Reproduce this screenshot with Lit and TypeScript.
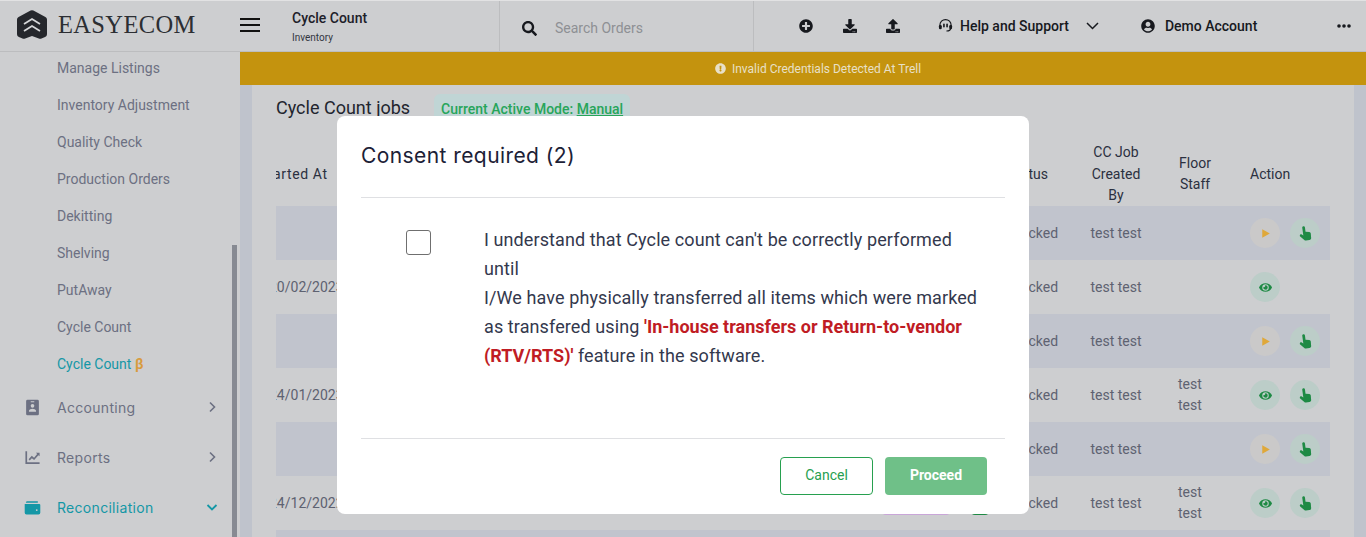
import { LitElement, html, css, svg } from "lit";
import { customElement } from "lit/decorators.js";

const ic = (vb: string, d: string, cls = "") =>
  html`<svg class=${cls} viewBox=${vb} fill="currentColor" aria-hidden="true">${svg`<path d=${d}></path>`}</svg>`;

const P = {
  search: "M505 442.7L405.3 343c-4.5-4.5-10.6-7-17-7H372c27.6-35.3 44-79.7 44-128C416 93.1 322.9 0 208 0S0 93.1 0 208s93.1 208 208 208c48.3 0 92.7-16.4 128-44v16.3c0 6.4 2.5 12.5 7 17l99.7 99.7c9.4 9.4 24.6 9.4 33.9 0l28.3-28.3c9.4-9.4 9.4-24.6.1-34zM208 336c-70.7 0-128-57.2-128-128 0-70.7 57.2-128 128-128 70.7 0 128 57.2 128 128 0 70.7-57.2 128-128 128z",
  plus: "M256 8C119 8 8 119 8 256s111 248 248 248 248-111 248-248S393 8 256 8zm144 276c0 6.6-5.4 12-12 12h-92v92c0 6.6-5.4 12-12 12h-56c-6.6 0-12-5.4-12-12v-92h-92c-6.6 0-12-5.4-12-12v-56c0-6.6 5.4-12 12-12h92v-92c0-6.6 5.4-12 12-12h56c6.6 0 12 5.4 12 12v92h92c6.6 0 12 5.4 12 12v56z",
  download: "M216 0h80c13.3 0 24 10.7 24 24v168h87.7c17.8 0 26.7 21.5 14.1 34.1L269.7 378.3c-7.5 7.5-19.8 7.5-27.3 0L90.1 226.1c-12.6-12.6-3.7-34.1 14.1-34.1H192V24c0-13.3 10.7-24 24-24zm296 376v112c0 13.3-10.7 24-24 24H24c-13.3 0-24-10.7-24-24V376c0-13.3 10.7-24 24-24h146.7l49 49c20.1 20.1 52.5 20.1 72.6 0l49-49H488c13.3 0 24 10.7 24 24zm-124 88c0-11-9-20-20-20s-20 9-20 20 9 20 20 20 20-9 20-20zm64 0c0-11-9-20-20-20s-20 9-20 20 9 20 20 20 20-9 20-20z",
  upload: "M296 384h-80c-13.3 0-24-10.7-24-24V192h-87.7c-17.8 0-26.7-21.5-14.1-34.1L242.3 5.7c7.5-7.5 19.8-7.5 27.3 0l152.2 152.2c12.6 12.6 3.7 34.1-14.1 34.1H320v168c0 13.3-10.7 24-24 24zm216-8v112c0 13.3-10.7 24-24 24H24c-13.3 0-24-10.7-24-24V376c0-13.3 10.7-24 24-24h136v8c0 30.9 25.1 56 56 56h80c30.9 0 56-25.1 56-56v-8h136c13.3 0 24 10.7 24 24zm-124 88c0-11-9-20-20-20s-20 9-20 20 9 20 20 20 20-9 20-20zm64 0c0-11-9-20-20-20s-20 9-20 20 9 20 20 20 20-9 20-20z",
  user: "M248 8C111 8 0 119 0 256s111 248 248 248 248-111 248-248S385 8 248 8zm0 96c48.6 0 88 39.4 88 88s-39.4 88-88 88-88-39.4-88-88 39.4-88 88-88zm0 344c-58.7 0-111.3-26.6-146.5-68.2 18.8-35.4 55.6-59.8 98.5-59.8 2.4 0 4.8.4 7.1 1.1 13 4.2 26.6 6.9 40.9 6.9 14.3 0 28-2.7 40.9-6.9 2.3-.7 4.7-1.1 7.1-1.1 42.9 0 79.7 24.4 98.5 59.8C359.3 421.4 306.7 448 248 448z",
  eye: "M572.52 241.4C518.29 135.59 410.93 64 288 64S57.68 135.64 3.48 241.41a32.35 32.35 0 0 0 0 29.19C57.71 376.41 165.07 448 288 448s230.32-71.64 284.52-177.41a32.35 32.35 0 0 0 0-29.19zM288 400a144 144 0 1 1 144-144 143.93 143.93 0 0 1-144 144zm0-240a95.31 95.31 0 0 0-25.31 3.79 47.85 47.85 0 0 1-66.9 66.9A95.78 95.78 0 1 0 288 160z",
  info: "M504 256c0 136.997-111.043 248-248 248S8 392.997 8 256C8 119.083 119.043 8 256 8s248 111.083 248 248zm-248 50c-25.405 0-46 20.595-46 46s20.595 46 46 46 46-20.595 46-46-20.595-46-46-46zm-43.673-165.346l7.418 136c.347 6.364 5.609 11.346 11.982 11.346h48.546c6.373 0 11.635-4.982 11.982-11.346l7.418-136c.375-6.874-5.098-12.654-11.982-12.654h-63.383c-6.884 0-12.356 5.78-11.981 12.654z",
  hand: "M8.6 3.3c0-1.1.8-2 1.9-2s1.9.9 1.9 2v6.1l5.2 1.3c1.1.3 1.8 1.2 1.8 2.3l-.4 6.5c-.1 1.4-1.3 2.5-2.7 2.5h-5c-.9 0-1.7-.4-2.2-1.1L4 15.2c-.6-.8-.5-1.9.2-2.6.7-.6 1.7-.6 2.4 0l2 1.6V3.3z",
  play: "M6 4l14 8-14 8z",
  badge: "M5 1h14a2 2 0 0 1 2 2v18a2 2 0 0 1-2 2H5a2 2 0 0 1-2-2V3a2 2 0 0 1 2-2zm7 6a2.6 2.6 0 1 0 0 5.2A2.6 2.6 0 0 0 12 7zm-5 11h10v-1.4c0-2-3.3-3-5-3s-5 1-5 3V18zM9.5 3v1.6h5V3h-5z",
  chart: "M2 3h2.4v15.6H22V21H2V3zm4.5 11.5l4.5-5 3.2 2.8L18.6 7l-1.7-1.6H22v5l-1.7-1.7-6 7-3.2-2.8-3 3.3-1.6-1.7z",
  wallet: "M4 3h15.5v2.4H2.6C2.9 4 3.3 3 4 3zM1 7h20.5A1.5 1.5 0 0 1 23 8.5v11a2.5 2.5 0 0 1-2.5 2.5h-17A2.5 2.5 0 0 1 1 19.5V7zm17 7.3a1.3 1.3 0 1 0 0 2.6 1.3 1.3 0 0 0 0-2.6z",
};

type Row = { date?: string; staff?: boolean; first: "play" | "eye"; hand: boolean; tags?: boolean };
const rows: Row[] = [
  { first: "play", hand: true },
  { date: "20/02/2023", first: "eye", hand: false },
  { first: "play", hand: true },
  { date: "24/01/2023", staff: true, first: "eye", hand: true },
  { first: "play", hand: true },
  { date: "24/12/2022", staff: true, first: "eye", hand: true, tags: true },
  { first: "play", hand: true },
];

@customElement("app-root")
export class AppRoot extends LitElement {
  static styles = css`
    :host { display: block; height: 537px; overflow: hidden; position: relative; background: #cdced0;
      font-family: Roboto, "Liberation Sans", sans-serif; color: #2b3040; }
    svg { display: block; }
    .header { height: 52px; box-sizing: border-box; display: flex; align-items: stretch;
      border-top: 1px solid #e2e2e3; border-bottom: 1px solid #bcbdbf; background: #cdced0; }
    .brand { width: 240px; display: flex; align-items: center; padding-left: 17px; box-sizing: border-box; gap: 11px; }
    .brand svg { width: 30px; height: 30px; margin-top: -3px; }
    .brand span { font: 400 24.5px "Liberation Serif", serif; color: #2c2e33; letter-spacing: .35px; margin-top: -3px; }
    .burger { width: 20px; display: flex; flex-direction: column; justify-content: center; gap: 4px; margin-top: -3px; }
    .burger i { display: block; height: 2px; background: #111; }
    .crumb { width: 239px; padding: 9px 0 0 32px; box-sizing: border-box; }
    .crumb b { display: block; font-size: 14px; font-weight: 500; line-height: 17px; color: #1d2029; }
    .crumb small { display: block; font-size: 10px; line-height: 12px; margin-top: 5px; color: #33363f; }
    .search { width: 255px; box-sizing: border-box; border-left: 1px solid #bcbdbf; border-right: 1px solid #bcbdbf;
      display: flex; align-items: center; padding: 4px 0 0 22px; gap: 18px; color: #8e9094; font-size: 14px; }
    .search svg { width: 15px; height: 15px; color: #17191e; }
    .tools { flex: 1; display: flex; align-items: center; color: #17191e; padding: 0 0 1px 45px; font-size: 14px; font-weight: 500; }
    .tools svg { width: 14px; height: 14px; flex: none; }
    .gap30 { margin-left: 30px; }
    .gap29 { margin-left: 29px; }
    .tools svg.head { margin-left: 38px; width: 15px; height: 15px; }
    .help { margin-left: 7px; }
    .tools svg.chev { width: 13px; height: 8px; margin-left: 17px; }
    .tools svg.acc { margin-left: 42px; }
    .demo { margin-left: 10px; }
    .tools svg.dots { width: 14px; height: 4px; margin-left: 80px; }
    .main { display: flex; height: 485px; }
    .side { width: 240px; flex: none; position: relative; overflow: hidden; }
    .subs { margin-top: -2px; }
    .sub { height: 37px; line-height: 37px; margin-left: 57px; font-size: 14px; color: #6c7082; }
    .sub.on { color: #1497a6; }
    .sub.on b { color: #d89b3e; font-weight: 700; }
    .nav { height: 50px; display: flex; align-items: center; padding: 0 0 2px 24px; box-sizing: border-box; color: #6c7082;
      font: 400 14px Inter, "Noto Sans", sans-serif; letter-spacing: .3px; }
    .nav .ni { width: 17px; height: 17px; flex: none; }
    .nav span { margin-left: 16px; flex: 1; }
    .nav .ar { width: 12px; height: 12px; margin-right: 22px; flex: none; }
    .nav.on { color: #1497a6; }
    .thumb { position: absolute; left: 232px; top: 193px; width: 5px; height: 300px; background: #878a92; }
    .content { flex: 1; display: flex; flex-direction: column; min-width: 0; }
    .banner { height: 33px; flex: none; background: #c4930e; color: #e8e0c8; font-size: 12px; display: flex;
      align-items: center; justify-content: center; gap: 6px; padding-left: 30px; box-sizing: border-box; }
    .banner svg { width: 11px; height: 11px; }
    .work { flex: 1; background: #cdced0; margin: 0 12px; box-shadow: -12px 0 0 #bfc3cc, 12px 0 0 #bfc3cc; padding: 9px 24px 0; min-height: 0; }
    .title { display: flex; align-items: flex-start; gap: 23px; height: 46px; }
    .title h2 { margin: 0; font-size: 18px; font-weight: 400; line-height: 28px; color: #22252e; }
    .pill { background: #c0d5d5; border-radius: 6px; height: 32px; line-height: 30px; padding: 0 7px; margin-left: 1px; font-size: 14px; font-weight: 500; color: #27a55a; }
    .pill u { text-underline-offset: 1px; }
    .grid { display: grid; grid-template-columns: 606px 89px 29px 75px 82px 93px 80px; align-items: center; width: 1054px; }
    .th { height: 66px; box-sizing: border-box; padding-top: 2px; font-size: 14px; line-height: 21.5px; color: #2b3040; }
    .row { height: 54px; font-size: 14px; color: #5e6271; }
    .row.alt { background: #c1c4cd; }
    .clip { overflow: hidden; white-space: nowrap; }
    .clip span { display: inline-block; margin-left: -7px; }
    .th .clip span { margin-left: -17px; letter-spacing: .6px; }
    .st { padding-left: 8px; }
    .row .st { padding-left: 13px; }
    .ctr { text-align: center; }
    .staff { padding-left: 21px; width: 34px; line-height: 21px; }
    .th .staff { text-align: center; }
    .acts { display: flex; gap: 10px; }
    .act { width: 30px; height: 30px; border-radius: 50%; background: #bccdc8; color: #1e8a44; display: flex; align-items: center; justify-content: center; }
    .act.p { background: #cac9c9; color: #dfa83a; }
    .act svg { width: 13px; height: 13px; }
    .act.h svg { width: 17px; height: 17px; transform: rotate(-8deg); }
    .tag { height: 24px; border-radius: 4px; }
    .tag.a { width: 68px; background: #c9a6d8; }
    .tag.b { width: 18px; background: #1e8a44; }
    .modal { position: absolute; left: 337px; top: 116px; width: 692px; height: 398px; background: #fff; border-radius: 8px;
      display: flex; flex-direction: column; padding: 0 24px; box-sizing: border-box; }
    .mh { height: 82px; flex: none; display: flex; align-items: center; padding-bottom: 3px; box-sizing: border-box; border-bottom: 1px solid #dfe0e3;
      font: 400 21px Inter, "Noto Sans", sans-serif; color: #1c2136; letter-spacing: .42px; }
    .mb { flex: 1; display: flex; align-items: flex-start; padding-top: 27px; border-bottom: 1px solid #dfe0e3; }
    .cb { width: 25px; height: 25px; box-sizing: border-box; border: 1px solid #6f6f6f; border-radius: 3px; margin: 5px 0 0 45px; flex: none; }
    .txt { margin-left: 53px; width: 500px; font-size: 18px; line-height: 29px; color: #33384d; letter-spacing: .1px; }
    .txt b { color: #c01c24; font-weight: 700; letter-spacing: 0; }
    .mf { height: 75px; flex: none; display: flex; justify-content: flex-end; align-items: flex-start; gap: 12px; padding: 18px 18px 0 0; box-sizing: border-box; }
    .btn { height: 38px; box-sizing: border-box; border-radius: 4px; font-size: 14px; display: flex; align-items: center; justify-content: center; padding-bottom: 2px; }
    .cancel { width: 93px; border: 1px solid #27a04f; color: #27a04f; }
    .go { width: 102px; background: #6fc088; color: #fff; font-weight: 700; }
  `;

  render() {
    return html`
      <div class="header">
        <div class="brand">
          <svg viewBox="0 0 30 30">
            <path fill="#25272c" d="M13.6.6a3 3 0 0 1 2.8 0l12 6.4A3 3 0 0 1 30 9.6v14.6a3 3 0 0 1-1.9 2.8l-3.6 1.6a3 3 0 0 1-2 .1L15 26l-7.500 2.700a3 3 0 0 1-2-.1L1.900 27A3 3 0 0 1 0 24.200V9.600A3 3 0 0 1 1.600 7z"></path>
            <path fill="none" stroke="#d6d7d9" stroke-width="1.800" d="M7 14l8-5 8 5M7 21l8-5 8 5"></path>
          </svg>
          <span>EASYECOM</span>
        </div>
        <div class="burger"><i></i><i></i><i></i></div>
        <div class="crumb"><b>Cycle Count</b><small>Inventory</small></div>
        <div class="search">${ic("0 0 512 512", P.search)}<span>Search Orders</span></div>
        <div class="tools">
          ${ic("0 0 512 512", P.plus)}
          ${ic("0 0 512 512", P.download, "gap30")}
          ${ic("0 0 512 512", P.upload, "gap29")}
          <svg class="head" viewBox="0 0 24 24" fill="none" stroke="currentColor" stroke-width="1.800">
            <path d="M3 15v-3.500a9 9 0 0 1 18 0V15M20.500 15c0 3.500-3 5.800-7 5.800"></path>
            <rect x="1.500" y="11" width="4.500" height="7" rx="2" fill="currentColor" stroke="none"></rect>
            <rect x="18" y="11" width="4.500" height="7" rx="2" fill="currentColor" stroke="none"></rect>
            <path d="M9.500 10v4M14.500 10v4" stroke-width="2.600" stroke-linecap="round"></path>
          </svg>
          <span class="help">Help and Support</span>
          <svg class="chev" viewBox="0 0 13 8" fill="none" stroke="currentColor" stroke-width="1.500"><path d="M1 1l5.500 5.500L12 1"></path></svg>
          ${ic("0 0 496 512", P.user, "acc")}
          <span class="demo">Demo Account</span>
          <svg class="dots" viewBox="0 0 14 4" fill="currentColor"><circle cx="2" cy="2" r="1.800"></circle><circle cx="7" cy="2" r="1.800"></circle><circle cx="12" cy="2" r="1.800"></circle></svg>
        </div>
      </div>
      <div class="main">
        <nav class="side">
          <div class="subs">
            ${["Manage Listings", "Inventory Adjustment", "Quality Check", "Production Orders", "Dekitting", "Shelving", "PutAway", "Cycle Count"].map(
              (s) => html`<div class="sub">${s}</div>`
            )}
            <div class="sub on">Cycle Count <b>β</b></div>
          </div>
          <div class="nav">${ic("0 0 24 24", P.badge, "ni")}<span>Accounting</span>
            <svg class="ar" viewBox="0 0 12 12" fill="none" stroke="currentColor" stroke-width="1.600"><path d="M4 1.500L8.500 6 4 10.500"></path></svg></div>
          <div class="nav">${ic("0 0 24 24", P.chart, "ni")}<span>Reports</span>
            <svg class="ar" viewBox="0 0 12 12" fill="none" stroke="currentColor" stroke-width="1.600"><path d="M4 1.500L8.500 6 4 10.500"></path></svg></div>
          <div class="nav on">${ic("0 0 24 24", P.wallet, "ni")}<span>Reconciliation</span>
            <svg class="ar" viewBox="0 0 12 12" fill="none" stroke="currentColor" stroke-width="1.800"><path d="M1.500 4L6 8.500 10.500 4"></path></svg></div>
          <div class="thumb"></div>
        </nav>
        <div class="content">
          <div class="banner">${ic("0 0 512 512", P.info)}<span>Invalid Credentials Detected At Trell</span></div>
          <div class="work">
            <div class="title"><h2>Cycle Count jobs</h2><div class="pill">Current Active Mode: <u>Manual</u></div></div>
            <div class="grid th">
              <div class="clip"><span>Started At</span></div><div></div><div></div>
              <div class="st">Status</div>
              <div class="ctr">CC Job<br />Created<br />By</div>
              <div class="staff">Floor Staff</div>
              <div>Action</div>
            </div>
            ${rows.map(
              (r, i) => html`<div class="grid row ${i % 2 ? "" : "alt"}">
                <div class="clip"><span>${r.date ?? ""}</span></div>
                <div>${r.tags ? html`<div class="tag a"></div>` : ""}</div>
                <div>${r.tags ? html`<div class="tag b"></div>` : ""}</div>
                <div class="st">Locked</div>
                <div class="ctr">test test</div>
                <div class="staff">${r.staff ? "test test" : ""}</div>
                <div class="acts">
                  ${r.first === "play"
                    ? html`<div class="act p">${ic("0 0 24 24", P.play)}</div>`
                    : html`<div class="act">${ic("0 0 576 512", P.eye)}</div>`}
                  ${r.hand ? html`<div class="act h">${ic("0 0 24 24", P.hand)}</div>` : ""}
                </div>
              </div>`
            )}
          </div>
        </div>
      </div>
      <div class="modal">
        <div class="mh">Consent required (2)</div>
        <div class="mb">
          <div class="cb"></div>
          <div class="txt">
            I understand that Cycle count can't be correctly performed until<br />
            I/We have physically transferred all items which were marked as transfered using
            <b>'In-house transfers or Return-to-vendor (RTV/RTS)'</b> feature in the software.
          </div>
        </div>
        <div class="mf"><div class="btn cancel">Cancel</div><div class="btn go">Proceed</div></div>
      </div>
    `;
  }
}
